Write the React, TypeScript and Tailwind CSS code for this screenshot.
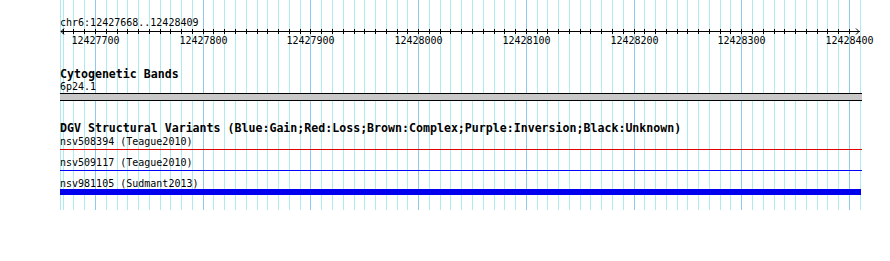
const FROM = 12427668;
const TO = 12428409;
const PX_PER_BP = 1.0771;

// screen column of a base position
const xOf = (bp: number) => Math.floor(95.5 + (bp - 12427700) * PX_PER_BP) + 0.5;

const gridBps: number[] = [];
for (let bp = 12427670; bp <= 12428410; bp += 10) gridBps.push(bp);

const majorBps = gridBps.filter((bp) => bp % 100 === 0);

const variants = [
  { name: 'nsv508394', study: 'Teague2010', kind: 'line', color: 'bg-[#e00000]' },
  { name: 'nsv509117', study: 'Teague2010', kind: 'line', color: 'bg-[#0000ff]' },
  { name: 'nsv981105', study: 'Sudmant2013', kind: 'bar', color: 'bg-[#0000ee]' },
];

function Grid() {
  return (
    <svg className="absolute inset-0 pointer-events-none" width={890} height={261}>
      {gridBps.map((bp) => (
        <line key={bp} x1={xOf(bp)} x2={xOf(bp)} y1={0} y2={210} stroke={bp % 100 === 0 ? '#8ec8ea' : '#aeeaee'} strokeWidth={1} />
      ))}
      <line x1={60.5} x2={60.5} y1={0} y2={210} stroke="#aeeaee" strokeWidth={1} />
    </svg>
  );
}

function Ruler() {
  return (
    <svg className="absolute left-0 top-0 pointer-events-none" width={890} height={50}>
      <line x1={61} x2={860} y1={31.5} y2={31.5} stroke="#000" strokeWidth={1} />
      <polyline points="64,28.5 61,31.5 64,34.5" fill="none" stroke="#000" strokeWidth={1} />
      <polyline points="856,28.5 859,31.5 856,34.5" fill="none" stroke="#000" strokeWidth={1} />
      {gridBps.filter((bp) => bp < 12428410).map((bp) => (
        <line key={bp} x1={xOf(bp)} x2={xOf(bp)} y1={29} y2={34} stroke="#000" strokeWidth={1} />
      ))}
      {majorBps.map((bp) => (
        <text key={bp} x={xOf(bp)} y={44} textAnchor="middle" fontSize={10} fill="#000" fontFamily="'DejaVu Sans Mono', monospace">
          {bp}
        </text>
      ))}
    </svg>
  );
}

export default function App() {
  return (
    <div className="relative w-[890px] h-[261px] bg-white overflow-hidden text-black font-['DejaVu_Sans_Mono',monospace]">
      <Grid />
      <Ruler />
      <div className="relative pl-[60px] pt-[17px] w-[862px]">
        <div className="text-[10px] leading-[11px]">chr6:{FROM}..{TO}</div>

        <div className="mt-[40px]">
          <h3 className="text-[11.6px] leading-[13px] font-bold">Cytogenetic Bands</h3>
          <div className="text-[10px] leading-[11px]">6p24.1</div>
          <div className="mt-px h-[8px] border-y border-black bg-[#c8c8c8]" />
        </div>

        <div className="mt-[21px]">
          <h3 className="text-[11.6px] leading-[13px] font-bold whitespace-nowrap">
            DGV Structural Variants (Blue:Gain;Red:Loss;Brown:Complex;Purple:Inversion;Black:Unknown)
          </h3>
          <div className="mt-px flex flex-col gap-[7px]">
            {variants.map((v) => (
              <div key={v.name}>
                <div className="text-[10px] leading-[11px] whitespace-pre">{v.name} ({v.study})</div>
                {v.kind === 'line' ? (
                  <div className={`mt-[2px] h-px ${v.color}`} />
                ) : (
                  <div className={`h-[6px] w-[801px] ${v.color}`} />
                )}
              </div>
            ))}
          </div>
        </div>
      </div>
    </div>
  );
}
